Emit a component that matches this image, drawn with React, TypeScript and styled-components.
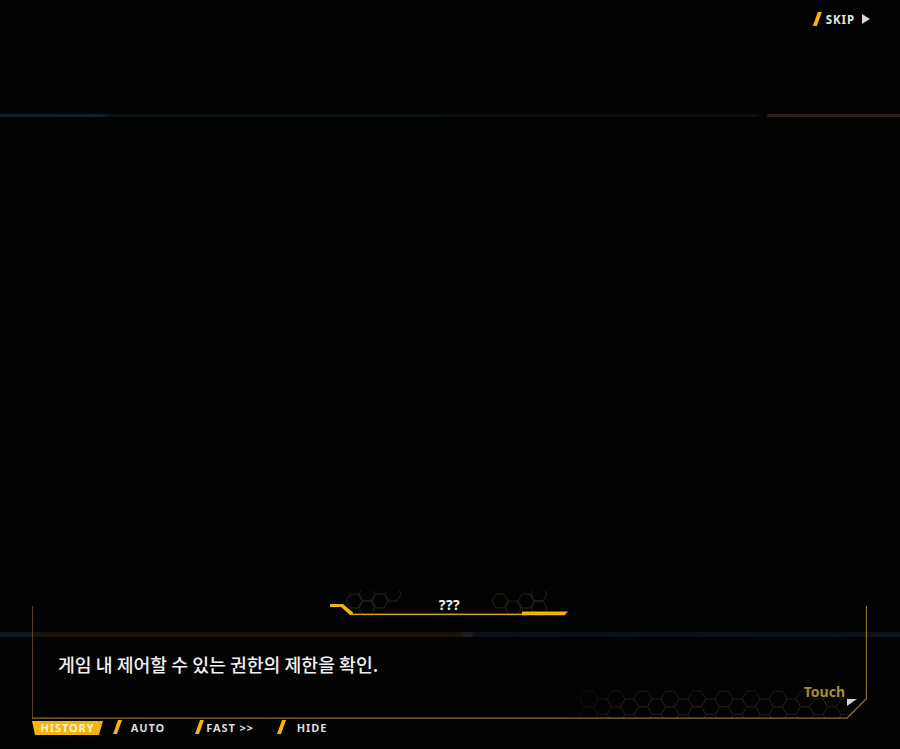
import React from 'react';
import styled, { createGlobalStyle } from 'styled-components';

const GlobalStyle = createGlobalStyle`
  html, body {
    margin: 0;
    padding: 0;
    background: #000;
  }
  body {
    font-family: 'Noto Sans', 'Noto Sans CJK KR', sans-serif;
  }
`;

const GOLD = '#f5b40c';

const Screen = styled.div`
  display: flex;
  flex-direction: column;
  width: 100%;
  height: 100vh;
  background: #020202;
  overflow: hidden;
`;

const TopBar = styled.div`
  display: flex;
  justify-content: flex-end;
  align-items: center;
  height: 38px;
  padding-right: 30px;
  box-sizing: border-box;
`;

const SkipButton = styled.button`
  display: flex;
  align-items: center;
  gap: 4px;
  padding: 0;
  border: none;
  background: none;
  color: #e6e6e6;
  font-family: 'Noto Sans', sans-serif;
  font-size: 11.5px;
  font-weight: 700;
  letter-spacing: 0.9px;
  cursor: pointer;
`;

const Slash = styled.span<{ $h?: number }>`
  display: inline-block;
  width: 9px;
  height: ${(p) => p.$h ?? 14}px;
  background: ${GOLD};
  clip-path: polygon(5px 0, 9px 0, 4px 100%, 0 100%);
`;

const PlayMark = styled.span`
  margin-left: 3px;
  width: 0;
  height: 0;
  border-top: 5px solid transparent;
  border-bottom: 5px solid transparent;
  border-left: 8px solid #d8d8d8;
`;

const ScanLine = styled.div`
  margin-top: 76px;
  height: 3px;
  filter: blur(0.6px);
  background: linear-gradient(
    to right,
    #111c24 0,
    #13202a 100px,
    #0a1216 110px,
    #0a1115 755px,
    #020202 762px,
    #020202 766px,
    #29230f 768px,
    #28220f 100%
  );
`;

const Spacer = styled.div`
  flex: 1;
`;

const BottomArea = styled.div`
  display: flex;
  flex-direction: column;
  padding-bottom: 14px;
  background-image: linear-gradient(
    to right,
    #0e1a22 0,
    #0e1a22 32px,
    #1a1309 33px,
    #171108 460px,
    #1a1d21 465px,
    #1a1d21 472px,
    #0a1015 474px,
    #0c1318 100%
  );
  background-size: 100% 5px;
  background-position: 0 41px;
  background-repeat: no-repeat;
`;

const Dialog = styled.section`
  position: relative;
  display: flex;
  flex-direction: column;
  height: 128px;
  margin: 0 33px 0 32px;
`;

const FrameArt = styled.svg`
  position: absolute;
  inset: 0;
  pointer-events: none;
`;

const Nameplate = styled.div`
  position: relative;
  align-self: center;
  width: 240px;
  height: 26px;
  display: flex;
  justify-content: center;
`;

const NameArt = styled.svg`
  position: absolute;
  inset: 0;
`;

const Speaker = styled.span`
  position: relative;
  margin-top: 5px;
  color: #f4f4f4;
  font-size: 14px;
  font-weight: 700;
  line-height: 18px;
  letter-spacing: 0.5px;
`;

const Line = styled.p`
  position: relative;
  margin: 35px 0 0;
  padding-left: 26px;
  color: #f2f2f2;
  font-family: 'Noto Sans CJK KR', 'Noto Sans', sans-serif;
  font-size: 18.3px;
  font-weight: 500;
  line-height: 24px;
`;

const Footer = styled.div`
  position: relative;
  display: flex;
  justify-content: flex-end;
  align-items: flex-start;
  margin-top: 7px;
  padding-right: 10px;
`;

const TouchLabel = styled.span`
  color: #ad8a2a;
  font-size: 14px;
  font-weight: 700;
  line-height: 18px;
`;

const CornerMark = styled.span`
  margin: 16px 0 0 2px;
  width: 0;
  height: 0;
  border-top: 7px solid #d4d4d4;
  border-right: 10px solid transparent;
`;

const Controls = styled.nav`
  display: flex;
  align-items: center;
  height: 16px;
  padding-left: 32px;
`;

const HistoryTab = styled.button`
  width: 71px;
  height: 14px;
  margin-top: 2px;
  margin-right: 10px;
  padding: 0;
  border: none;
  background: ${GOLD};
  clip-path: polygon(0 0, 100% 0, calc(100% - 4px) 100%, 3px 100%);
  color: #fff3d2;
  font-family: 'Noto Sans', sans-serif;
  font-size: 11px;
  font-weight: 700;
  letter-spacing: 0.9px;
  line-height: 14px;
`;

const ControlItem = styled.button`
  display: flex;
  align-items: center;
  width: 82px;
  height: 16px;
  padding: 0;
  border: none;
  background: none;
  cursor: pointer;
`;

const ControlLabel = styled.span`
  width: 52px;
  text-align: center;
  color: #dcdcdc;
  font-family: 'Noto Sans', sans-serif;
  font-size: 11px;
  font-weight: 700;
  letter-spacing: 0.9px;
  white-space: nowrap;
`;

// flat-top hexagon outline centred on (cx, cy)
const hex = (cx: number, cy: number, r: number) => {
  const h = (Math.sqrt(3) * r) / 2;
  return `M${cx + r} ${cy}L${cx + r / 2} ${cy + h}L${cx - r / 2} ${cy + h}L${cx - r} ${cy}L${cx - r / 2} ${cy - h}L${cx + r / 2} ${cy - h}Z`;
};

const honeycomb = (x0: number, y0: number, cols: number, rows: number, r: number) => {
  const h = Math.sqrt(3) * r;
  const parts: string[] = [];
  for (let c = 0; c < cols; c++) {
    for (let row = 0; row < rows; row++) {
      const cx = x0 + c * 1.5 * r;
      const cy = y0 + row * h + (c % 2 ? h / 2 : 0);
      parts.push(hex(cx, cy, r));
    }
  }
  return parts.join('');
};

const DialogFrame: React.FC = () => (
  <FrameArt width="835" height="128" viewBox="0 0 835 128">
    <defs>
      <linearGradient id="combFade" x1="0" x2="1" y1="0" y2="0">
        <stop offset="0" stopColor="#fff" stopOpacity="0" />
        <stop offset="0.25" stopColor="#fff" stopOpacity="1" />
        <stop offset="1" stopColor="#fff" stopOpacity="1" />
      </linearGradient>
      <mask id="combMask">
        <rect x="520" y="92" width="300" height="36" fill="url(#combFade)" />
      </mask>
    </defs>
    <g mask="url(#combMask)" fill="none" stroke="#221c0f" strokeWidth="1">
      <path d={honeycomb(530, 108, 24, 2, 9)} />
    </g>
    <path d="M0.5 15 V127" stroke="#54441d" strokeWidth="1" fill="none" />
    <path d="M0 127.2 H815 L834.5 107.5 V15" stroke="#8a6f30" strokeWidth="1.3" fill="none" />
  </FrameArt>
);

const NameplateArt: React.FC = () => (
  <NameArt width="240" height="26" viewBox="0 0 240 26">
    <g fill="none" stroke="#2a2312" strokeWidth="1">
      <path d={hex(24, 10, 8) + hex(37, 17, 8) + hex(37, 3, 8) + hex(50, 10, 8) + hex(63, 3, 8)} />
      <path d={hex(170, 10, 8) + hex(183, 17, 8) + hex(196, 10, 8) + hex(209, 17, 8) + hex(209, 3, 8)} />
    </g>
    <polygon points="0,13 13,13 23,21.5 23,24 20,24 11,16 0,16" fill={GOLD} />
    <rect x="20" y="22.6" width="175" height="1.5" fill="#d9a312" />
    <polygon points="192,20.5 238,20.5 234.5,24.2 192,24.2" fill={GOLD} />
  </NameArt>
);

const App: React.FC = () => {
  const controls = ['AUTO', 'FAST >>', 'HIDE'];

  return (
    <>
      <GlobalStyle />
      <Screen>
        <TopBar>
          <SkipButton>
            <Slash />
            SKIP
            <PlayMark />
          </SkipButton>
        </TopBar>
        <ScanLine />
        <Spacer />
        <BottomArea>
          <Dialog>
            <DialogFrame />
            <Nameplate>
              <NameplateArt />
              <Speaker>???</Speaker>
            </Nameplate>
            <Line>게임 내 제어할 수 있는 권한의 제한을 확인.</Line>
            <Footer>
              <TouchLabel>Touch</TouchLabel>
              <CornerMark />
            </Footer>
          </Dialog>
          <Controls>
            <HistoryTab>HISTORY</HistoryTab>
            {controls.map((label) => (
              <ControlItem key={label}>
                <Slash />
                <ControlLabel>{label}</ControlLabel>
              </ControlItem>
            ))}
          </Controls>
        </BottomArea>
      </Screen>
    </>
  );
};

export default App;
